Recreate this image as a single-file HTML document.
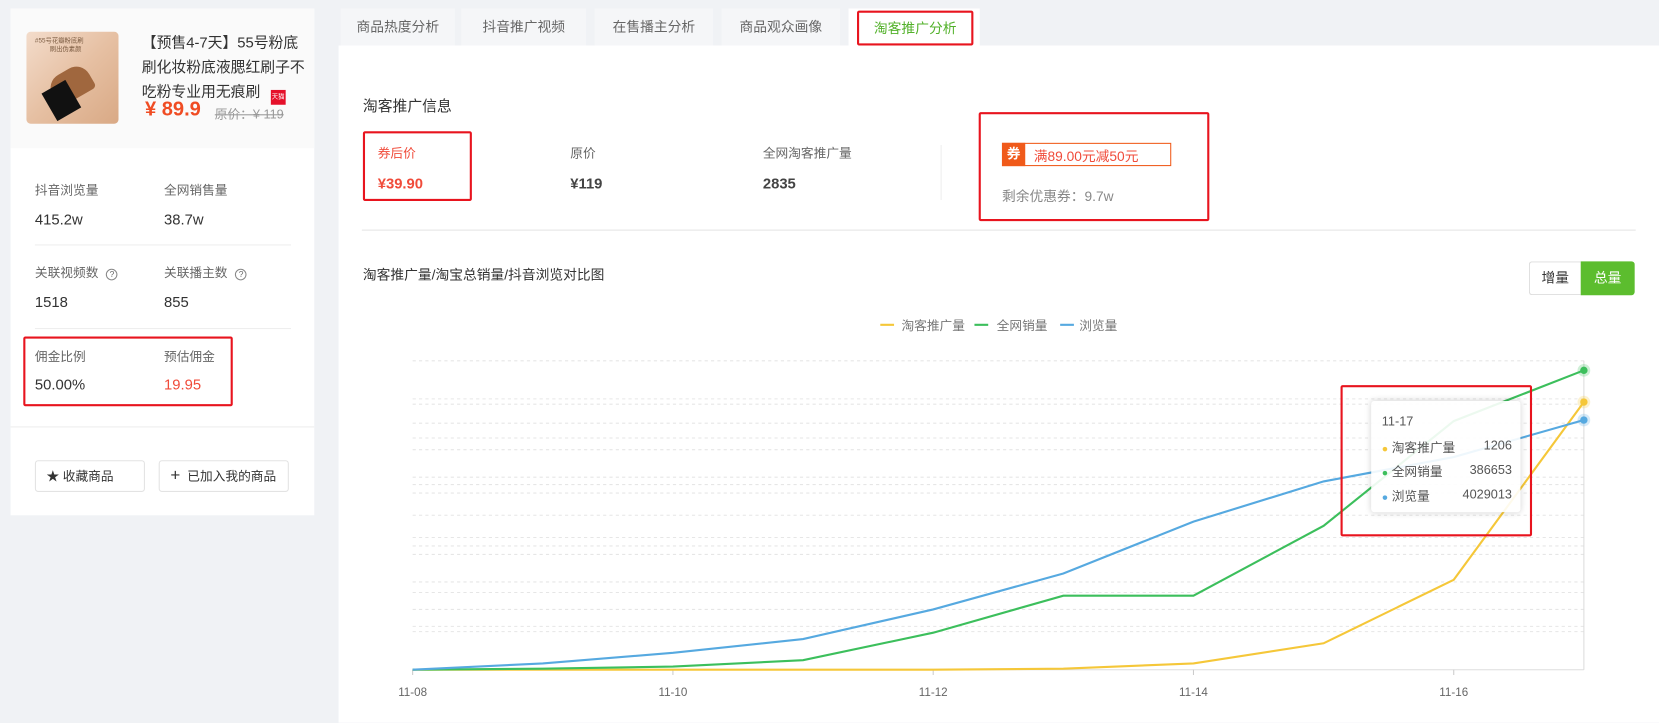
<!DOCTYPE html>
<html><head><meta charset="utf-8"><style>
html,body{margin:0;padding:0;width:1659px;height:723px;overflow:hidden;background:#f0f2f5;}
#w{position:absolute;left:0;top:0;width:1568px;height:683px;transform:scale(1.05804);transform-origin:0 0;font-family:"Liberation Sans","Noto Sans CJK SC",sans-serif;color:#333;}
.a{position:absolute;white-space:nowrap;}
.lbl{font-size:12px;color:#666;}
.val{font-size:14px;color:#333;}
.rb{position:absolute;border:2px solid #e8141e;border-radius:2px;}
.tab{position:absolute;top:8px;height:35px;background:#f5f6f8;font-size:13px;color:#666;line-height:35px;text-align:center;}
</style></head><body><div id="w">
<!-- left card -->
<div class="a" style="left:10px;top:8px;width:287px;height:479px;background:#fff;"></div>
<div class="a" style="left:10px;top:8px;width:287px;height:132px;background:#fafafa;"></div>
<div class="a" style="left:25px;top:30px;width:87px;height:87px;border-radius:4px;background:linear-gradient(135deg,#f3dccb,#e6c0a3 50%,#d9a985);overflow:hidden;">
 <div class="a" style="left:8px;top:3px;font-size:6px;color:#7a5a40;">#55号花瓣粉底刷</div>
 <div class="a" style="left:22px;top:11px;font-size:6px;color:#7a5a40;">刷出伪素颜</div>
 <div class="a" style="left:22px;top:36px;width:40px;height:28px;background:#a0673e;border-radius:14px 14px 4px 4px;transform:rotate(-30deg);"></div>
 <div class="a" style="left:20px;top:50px;width:26px;height:30px;background:#111;transform:rotate(-30deg);"></div>
</div>
<div class="a" style="left:134px;top:29px;font-size:14px;line-height:23px;color:#333;">【预售4-7天】55号粉底<br>刷化妆粉底液腮红刷子不<br>吃粉专业用无痕刷 <span style="display:inline-block;width:14px;height:14px;background:#e5102a;vertical-align:-2px;margin-left:6px;font-size:6px;color:#fff;line-height:14px;text-align:center;">天猫</span></div>
<div class="a" style="left:137px;top:93px;font-size:19px;font-weight:bold;color:#f04c23;">¥ 89.9</div>
<div class="a" style="left:203px;top:99px;font-size:12px;color:#999;text-decoration:line-through;">原价：¥ 119</div>

<div class="a lbl" style="left:33px;top:171px;">抖音浏览量</div>
<div class="a lbl" style="left:155px;top:171px;">全网销售量</div>
<div class="a val" style="left:33px;top:199px;">415.2w</div>
<div class="a val" style="left:155px;top:199px;">38.7w</div>
<div class="a" style="left:33px;top:231px;width:242px;height:1px;background:#eee;"></div>
<div class="a lbl" style="left:33px;top:249px;">关联视频数 <span style="display:inline-block;width:9px;height:9px;border:1px solid #888;border-radius:50%;font-size:8px;line-height:9px;text-align:center;margin-left:4px;">?</span></div>
<div class="a lbl" style="left:155px;top:249px;">关联播主数 <span style="display:inline-block;width:9px;height:9px;border:1px solid #888;border-radius:50%;font-size:8px;line-height:9px;text-align:center;margin-left:4px;">?</span></div>
<div class="a val" style="left:33px;top:277px;">1518</div>
<div class="a val" style="left:155px;top:277px;">855</div>
<div class="a" style="left:33px;top:310px;width:242px;height:1px;background:#eee;"></div>
<div class="a lbl" style="left:33px;top:328px;">佣金比例</div>
<div class="a lbl" style="left:155px;top:328px;">预估佣金</div>
<div class="a val" style="left:33px;top:355px;">50.00%</div>
<div class="a val" style="left:155px;top:355px;color:#f04b3a;">19.95</div>
<div class="rb" style="left:22px;top:318px;width:194px;height:62px;"></div>
<div class="a" style="left:10px;top:403px;width:287px;height:1px;background:#eee;"></div>
<div class="a" style="left:33px;top:435px;width:102px;height:28px;border:1px solid #e3e3e3;border-radius:3px;font-size:12px;line-height:28px;color:#333;"><span style="margin-left:10px;">★</span> 收藏商品</div>
<div class="a" style="left:150px;top:435px;width:121px;height:28px;border:1px solid #e3e3e3;border-radius:3px;font-size:12px;line-height:28px;color:#333;"><span style="margin-left:10px;font-size:16px;">+</span>&nbsp; 已加入我的商品</div>

<!-- tabs -->
<div class="tab" style="left:322px;width:108px;">商品热度分析</div>
<div class="tab" style="left:436px;width:118px;">抖音推广视频</div>
<div class="tab" style="left:562px;width:112px;">在售播主分析</div>
<div class="tab" style="left:682px;width:112px;">商品观众画像</div>
<div class="a" style="left:320px;top:43px;width:1248px;height:640px;background:#fff;"></div>
<div class="tab" style="left:802px;width:124px;background:#fff;color:#52b12a;height:37px;"></div>
<div class="a" style="left:810px;top:10px;width:106px;height:29px;border:2px solid #e8141e;border-radius:2px;font-size:13px;color:#52b12a;line-height:29px;text-align:center;">淘客推广分析</div>

<div class="a" style="left:343px;top:90px;font-size:14px;color:#333;">淘客推广信息</div>
<div class="rb" style="left:343px;top:124px;width:99px;height:62px;"></div>
<div class="a" style="left:357px;top:136px;font-size:12px;color:#f04b3a;">券后价</div>
<div class="a" style="left:357px;top:165px;font-size:14px;font-weight:bold;color:#f04b3a;">¥39.90</div>
<div class="a lbl" style="left:539px;top:136px;">原价</div>
<div class="a" style="left:539px;top:165px;font-size:14px;font-weight:bold;color:#444;">¥119</div>
<div class="a lbl" style="left:721px;top:136px;">全网淘客推广量</div>
<div class="a" style="left:721px;top:165px;font-size:14px;font-weight:bold;color:#444;">2835</div>
<div class="a" style="left:889px;top:137px;width:1px;height:52px;background:#eee;"></div>
<div class="rb" style="left:925px;top:106px;width:214px;height:99px;"></div>
<div class="a" style="left:947px;top:135px;width:158px;height:20px;border:1px solid #f05a1a;"></div>
<div class="a" style="left:947px;top:135px;width:22px;height:22px;background:#f05a1a;color:#fff;font-size:13px;font-weight:bold;line-height:22px;text-align:center;">券</div>
<div class="a" style="left:977px;top:137px;font-size:13px;color:#f04b3a;">满89.00元减50元</div>
<div class="a lbl" style="left:947px;top:175px;color:#888;font-size:13px;">剩余优惠券：9.7w</div>
<div class="a" style="left:342px;top:217px;width:1204px;height:1px;background:#e5e5e5;"></div>

<div class="a" style="left:343px;top:249px;font-size:13px;color:#333;">淘客推广量/淘宝总销量/抖音浏览对比图</div>
<div class="a" style="left:1445px;top:247px;width:48px;height:30px;border:1px solid #ddd;border-right:none;border-radius:3px 0 0 3px;font-size:13px;line-height:30px;text-align:center;color:#333;">增量</div>
<div class="a" style="left:1494px;top:247px;width:51px;height:32px;background:#5cbd2e;border-radius:0 3px 3px 0;font-size:13px;line-height:32px;text-align:center;color:#fff;">总量</div>

<div class="a" style="left:832px;top:306px;width:13px;height:2px;background:#f5c739;"></div>
<div class="a lbl" style="left:852px;top:299px;color:#777;">淘客推广量</div>
<div class="a" style="left:921px;top:306px;width:13px;height:2px;background:#3cbf5c;"></div>
<div class="a lbl" style="left:942px;top:299px;color:#777;">全网销量</div>
<div class="a" style="left:1002px;top:306px;width:13px;height:2px;background:#56a9e0;"></div>
<div class="a lbl" style="left:1020px;top:299px;color:#777;">浏览量</div>

<svg class="a" style="left:0;top:0;" width="1568" height="683">
<g stroke="#e6e6e6" stroke-width="1" stroke-dasharray="3,3">
<line x1="390" x2="1497" y1="341" y2="341"/><line x1="390" x2="1497" y1="377" y2="377"/><line x1="390" x2="1497" y1="382" y2="382"/><line x1="390" x2="1497" y1="400" y2="400"/><line x1="390" x2="1497" y1="414" y2="414"/><line x1="390" x2="1497" y1="425" y2="425"/><line x1="390" x2="1497" y1="451" y2="451"/><line x1="390" x2="1497" y1="458" y2="458"/><line x1="390" x2="1497" y1="466" y2="466"/><line x1="390" x2="1497" y1="487" y2="487"/><line x1="390" x2="1497" y1="508" y2="508"/><line x1="390" x2="1497" y1="516" y2="516"/><line x1="390" x2="1497" y1="524" y2="524"/><line x1="390" x2="1497" y1="550" y2="550"/><line x1="390" x2="1497" y1="560" y2="560"/><line x1="390" x2="1497" y1="576" y2="576"/><line x1="390" x2="1497" y1="592" y2="592"/><line x1="390" x2="1497" y1="597" y2="597"/>
</g>
<line x1="1497" x2="1497" y1="341" y2="633" stroke="#ddd"/>
<line x1="390" x2="1497" y1="633" y2="633" stroke="#ddd"/>
<g stroke="#ccc"><line x1="390" x2="390" y1="633" y2="638"/><line x1="636" x2="636" y1="633" y2="638"/><line x1="882" x2="882" y1="633" y2="638"/><line x1="1128" x2="1128" y1="633" y2="638"/><line x1="1374" x2="1374" y1="633" y2="638"/></g>
<g font-size="11" fill="#666" text-anchor="middle" font-family="Liberation Sans, sans-serif"><text x="390" y="658">11-08</text><text x="636" y="658">11-10</text><text x="882" y="658">11-12</text><text x="1128" y="658">11-14</text><text x="1374" y="658">11-16</text></g>
<polyline fill="none" stroke="#f5c739" stroke-width="2" points="390,633 513,633 636,633 759,633 882,633 1005,632 1128,627 1251,608 1374,548 1497,380"/>
<polyline fill="none" stroke="#3cbf5c" stroke-width="2" points="390,633 513,632 636,630 759,624 882,598 1005,563 1128,563 1251,497 1374,398 1497,350"/>
<polyline fill="none" stroke="#56a9e0" stroke-width="2" points="390,633 513,627 636,617 759,604 882,576 1005,542 1128,493 1251,455 1374,432 1497,397"/>
<circle cx="1497" cy="350" r="6" fill="#3cbf5c" opacity=".25"/><circle cx="1497" cy="350" r="3.5" fill="#3cbf5c"/>
<circle cx="1497" cy="380" r="6" fill="#f5c739" opacity=".25"/><circle cx="1497" cy="380" r="3.5" fill="#f5c739"/>
<circle cx="1497" cy="397" r="6" fill="#56a9e0" opacity=".25"/><circle cx="1497" cy="397" r="3.5" fill="#56a9e0"/>
</svg>

<div class="a" style="left:1296px;top:379px;width:141px;height:105px;background:rgba(255,255,255,0.9);box-shadow:0 0 6px rgba(0,0,0,0.18);border-radius:3px;font-size:12px;color:#555;">
 <div class="a" style="left:10px;top:12px;">11-17</div>
 <div class="a" style="left:10px;top:35px;"><span style="color:#f5c739;font-size:10px;">●</span> 淘客推广量</div><div class="a" style="right:8px;top:35px;">1206</div>
 <div class="a" style="left:10px;top:58px;"><span style="color:#3cbf5c;font-size:10px;">●</span> 全网销量</div><div class="a" style="right:8px;top:58px;">386653</div>
 <div class="a" style="left:10px;top:81px;"><span style="color:#56a9e0;font-size:10px;">●</span> 浏览量</div><div class="a" style="right:8px;top:81px;">4029013</div>
</div>
<div class="rb" style="left:1267px;top:364px;width:177px;height:139px;"></div>
</div></body></html>
